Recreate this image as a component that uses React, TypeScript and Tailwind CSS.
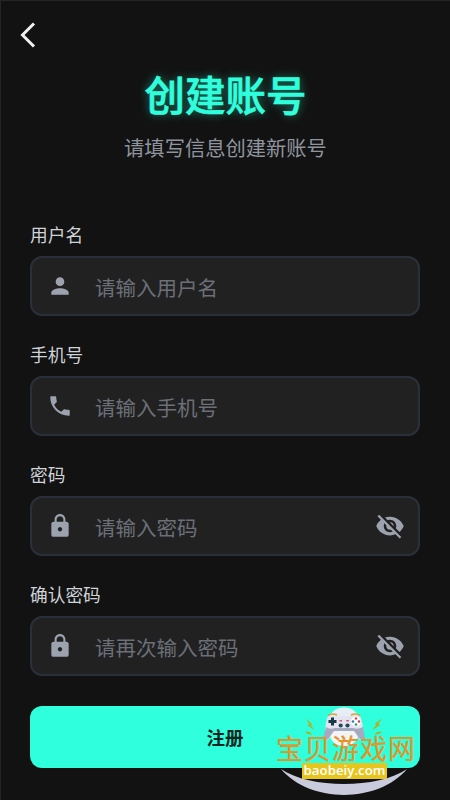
import { useState } from "react";
import { MdLock, MdPerson, MdVisibility, MdVisibilityOff } from "react-icons/md";

function PhoneIcon({ className }: { className?: string }) {
  return (
    <svg viewBox="0 0 24 24" fill="currentColor" className={className}>
      <path d="M6.620 10.790c1.440 2.830 3.760 5.140 6.590 6.590l2.200-2.200c.27-.27.67-.36 1.020-.24 1.120.37 2.330.57 3.570.57.55 0 1 .45 1 1V20c0 .55-.45 1-1 1-9.390 0-17-7.610-17-17 0-.55.45-1 1-1h3.500c.55 0 1 .45 1 1 0 1.250.2 2.450.57 3.570.11.35.03.74-.25 1.020l-2.200 2.200z" />
    </svg>
  );
}

const fields = [
  { id: "user", label: "用户名", placeholder: "请输入用户名", icon: MdPerson, secret: false },
  { id: "phone", label: "手机号", placeholder: "请输入手机号", icon: PhoneIcon, secret: false },
  { id: "password", label: "密码", placeholder: "请输入密码", icon: MdLock, secret: true },
  { id: "confirm", label: "确认密码", placeholder: "请再次输入密码", icon: MdLock, secret: true },
];

function Field({ id, label, placeholder, icon: Icon, secret }: (typeof fields)[number]) {
  const [visible, setVisible] = useState(false);
  const Eye = visible ? MdVisibility : MdVisibilityOff;
  return (
    <div className="flex flex-col gap-2.5">
      <label htmlFor={id} className="h-6 text-[17.7px] leading-6 text-[#d0d3d8]">
        {label}
      </label>
      <div className="flex h-[60px] items-center rounded-xl border-2 border-[#2a303a] bg-[#212121] pl-[15px] pr-[13px]">
        <Icon className="size-[26px] shrink-0 text-[#9ca3af]" />
        <input
          id={id}
          type={secret && !visible ? "password" : "text"}
          placeholder={placeholder}
          className="ml-[22px] mt-[3px] min-w-0 flex-1 bg-transparent text-[20.5px] text-gray-200 outline-none placeholder:text-[#6b6f78]"
        />
        {secret && (
          <button type="button" onClick={() => setVisible(!visible)}>
            <Eye className="size-[30px] text-[#9ca3af]" />
          </button>
        )}
      </div>
    </div>
  );
}

function SiteBadge() {
  return (
    <div className="pointer-events-none absolute left-[269px] top-[699px] h-[100px] w-[150px]">
      <svg viewBox="0 0 150 100" className="absolute inset-0 h-full w-full">
        <path d="M11 69 C40 89 108 89 137 69 C108 103.500 40 103.500 11 69Z" fill="#c9cadb" />
        <path d="M58 22 Q60 8 74 7.500 Q88 8 90 22Z" fill="#e6edf5" />
        <ellipse cx="74" cy="35" rx="14" ry="11" fill="#f2f4f6" />
        <path
          d="M58 16 Q62 13.500 68 16 H80 Q86 13.500 90 16 Q93 22 94 38 Q93 41 90 40 L84 30 H64 L58 40 Q55 41 55 38 Q55 22 58 16Z"
          fill="#e3e4ef"
        />
        <path
          d="M56 27 Q60 30 65 28 H83 Q88 30 93 27 L95 39 Q92 41 90 39 L84 31 H64 L58 39 Q56 41 53 39Z"
          fill="#a7a9bf"
        />
        <path d="M58 15.500 Q62 13 67 15 M81 15 Q86 13 90 15.500" stroke="#d6a238" strokeWidth="1.500" fill="none" />
        <path d="M62.500 17.500v8M58.500 21.500h8" stroke="#193849" strokeWidth="3" />
        <circle cx="86" cy="21.500" r="5" fill="#fff" />
        <circle cx="86" cy="18.500" r="1.300" fill="#d94b5b" />
        <circle cx="86" cy="24.500" r="1.300" fill="#37966f" />
        <circle cx="83" cy="21.500" r="1.300" fill="#317da5" />
        <circle cx="89" cy="21.500" r="1.300" fill="#c94354" />
        <circle cx="70.700" cy="25.500" r="2.100" fill="#254759" />
        <circle cx="77.500" cy="25.500" r="2.100" fill="#254759" />
        <path d="M69.500 20.700h2.500M76.300 20.700h2.500" stroke="#d5527a" strokeWidth="1.500" />
        <path
          d="M36 18.500l6 5.500-1 1.200 3.500 5-7-5 1.500-1.500zM35 31.500l5 .5 2 2.800-5-1zM112 18.500l-7 5 1 1.500-4 5.200 8-5-1.500-1.500zM112 31.500l-5 .5-3 2.800 6-1z"
          fill="#a9b42b"
        />
      </svg>
      <div className="absolute left-[6px] top-[34px] whitespace-nowrap text-[27px] leading-7 tracking-[1px] text-[#ec9527] [-webkit-text-stroke:0.2px_#cf8420]">
        宝贝游戏网
      </div>
      <div className="absolute left-8 top-[63px] flex h-4 w-[85px] items-center justify-center bg-[#e8c51d] pb-0.5 font-['Open_Sans'] text-[13.300px] font-semibold leading-4 text-white">
        baobeiy.com
      </div>
    </div>
  );
}

export default function App() {
  return (
    <main className="relative flex h-[800px] w-[450px] flex-col overflow-hidden border-l border-t border-[#252525] bg-[#121212] pl-[29px] pr-[30px] font-['Noto_Sans_CJK_SC',sans-serif]">
      <button type="button" aria-label="返回" className="-ml-3 mt-[19px] flex h-7 w-7 items-center">
        <svg viewBox="0 0 28 28" className="size-7" fill="none" stroke="#f1f1f1" strokeWidth="3">
          <path d="M16 3.500 L4.500 15 L16 26.500" />
        </svg>
      </button>

      <header className="mt-4 flex flex-col items-center">
        <h1 className="h-[60px] pl-px text-[40.500px] font-medium leading-[60px] text-[#2fffdc] [-webkit-text-stroke:0.7px_#2fffdc] [text-shadow:0_0_10px_#2fffdc80]">
          创建账号
        </h1>
        <p className="mt-2 h-[30px] pl-px text-[20.300px] leading-[30px] text-[#8f949e]">
          请填写信息创建新账号
        </p>
      </header>

      <form className="mt-[60px] flex flex-col gap-[26px]">
        {fields.map((field) => (
          <Field key={field.id} {...field} />
        ))}
        <button
          type="button"
          className="mt-1 h-[62px] rounded-xl bg-[#2fffdc] pt-0.5 text-[18.500px] font-bold text-[#10251f]"
        >
          注册
        </button>
      </form>

      <SiteBadge />
    </main>
  );
}
